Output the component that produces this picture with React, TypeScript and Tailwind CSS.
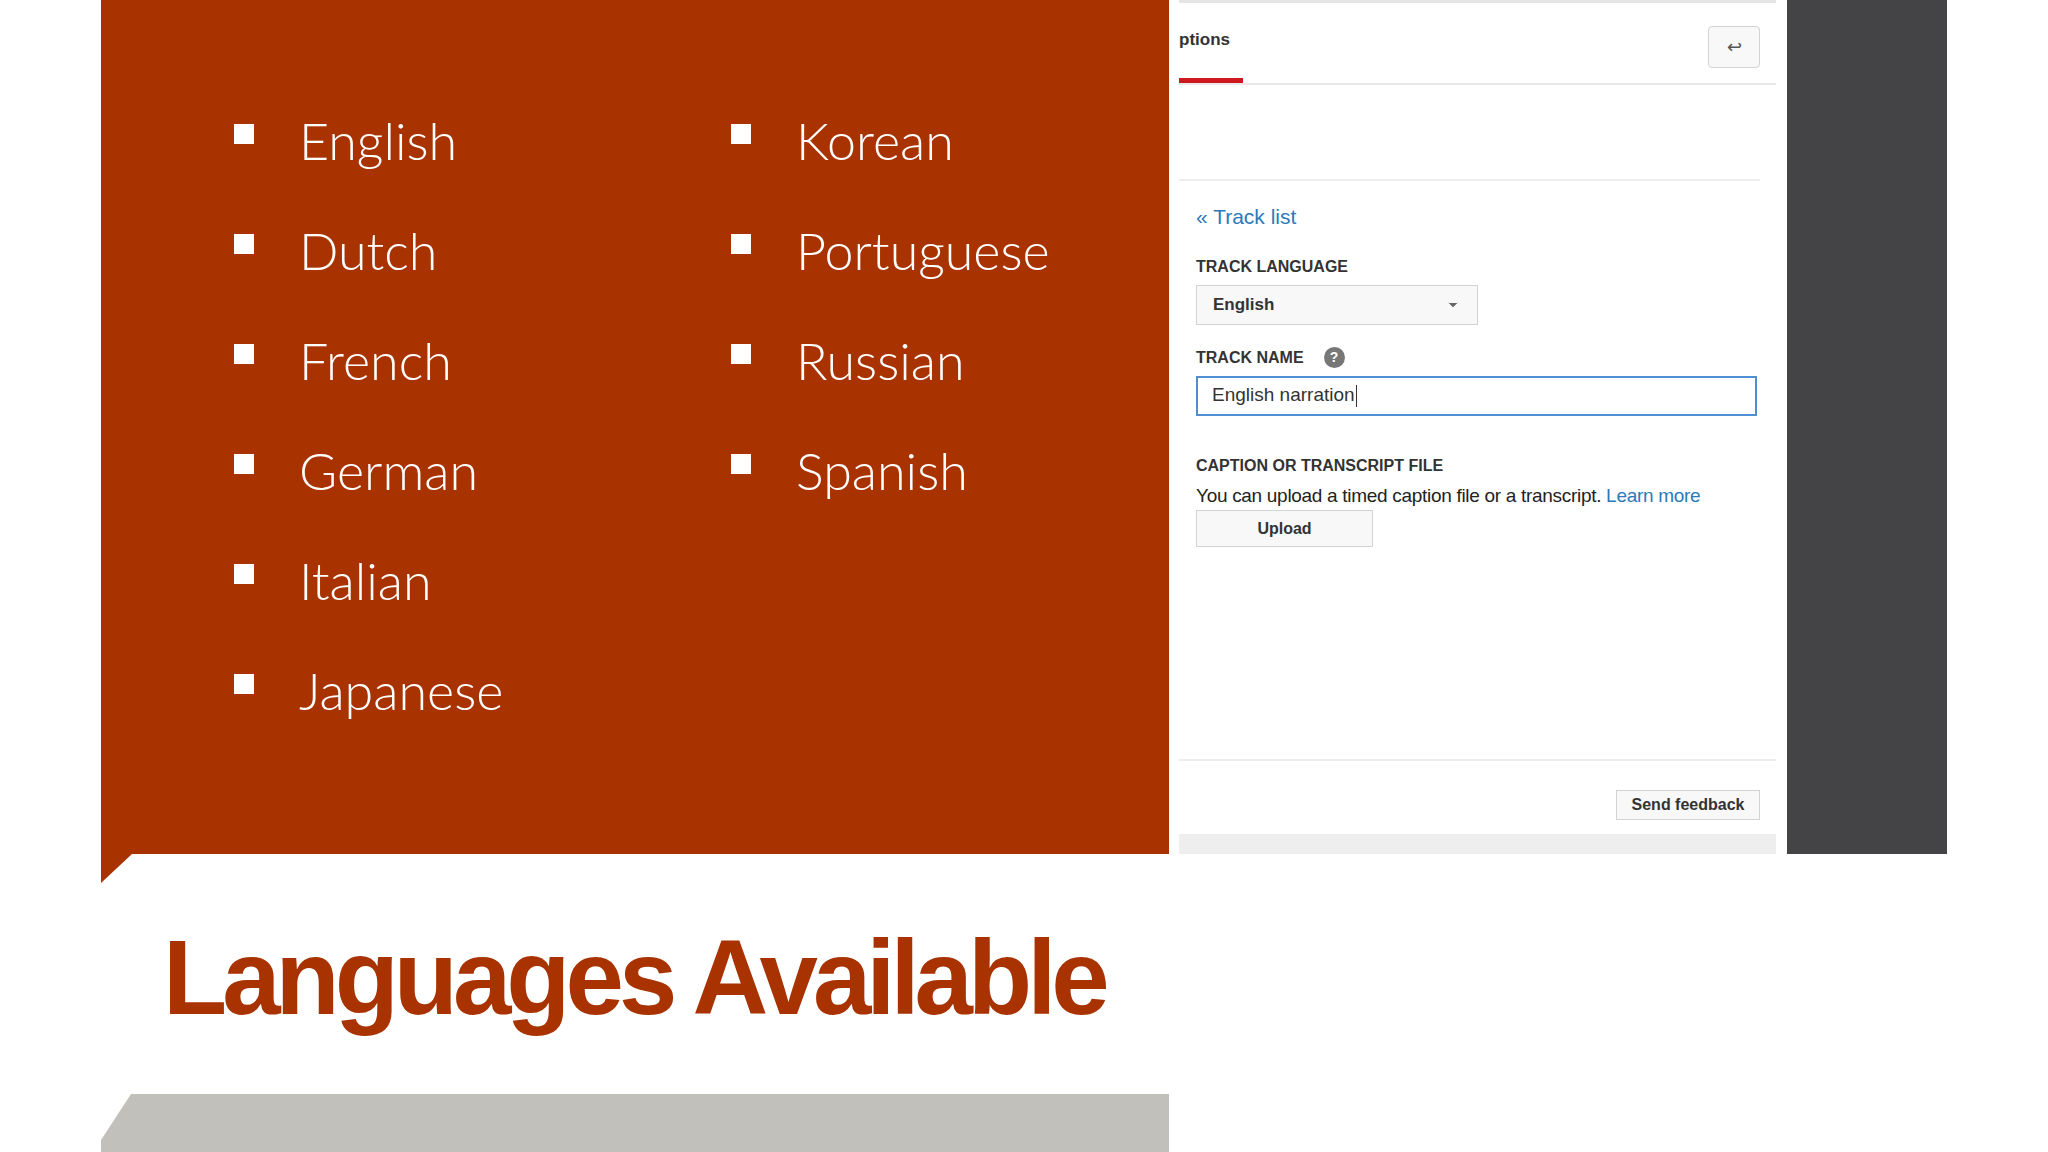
import React from 'react';
import { ChevronDown } from 'lucide-react';

const left = ['English', 'Dutch', 'French', 'German', 'Italian', 'Japanese'];
const right = ['Korean', 'Portuguese', 'Russian', 'Spanish'];

function Bullet({ label }: { label: string }) {
  return (
    <div className="flex h-[110px] items-center">
      <div className="mb-[12px] h-[20px] w-[20px] bg-white" />
      <span className="ml-[45px] text-[52px] font-light text-white" style={{ fontFamily: 'Lato, "Liberation Sans", sans-serif' }}>
        {label}
      </span>
    </div>
  );
}

function CaptionsPanel() {
  return (
    <div className="flex h-[854px] w-[597px] flex-col bg-white text-[#333]" style={{ fontFamily: '"Liberation Sans", Arial, sans-serif' }}>
      <div className="h-[3px] bg-[#e5e5e5]" />
      <div className="flex h-[82px] border-b-2 border-[#e8e8e8]">
        <div className="flex flex-col justify-end">
          <span className="mb-[26px] text-[17px] font-bold">ptions</span>
          <div className="h-[5px] w-[64px] bg-[#cc181e]" />
        </div>
        <div className="ml-auto mr-[16px] mt-[23px] flex h-[42px] w-[52px] items-center justify-center rounded-sm border border-[#d3d3d3] bg-[#f8f8f8] text-[18px] text-[#555]">
          ↩
        </div>
      </div>
      <div className="mr-[16px] mt-[94px] border-t-2 border-[#ececec]" />
      <div className="flex flex-col pl-[17px] pr-[19px]">
        <span className="mt-[20px] text-[21px] text-[#2a7ab9]">« Track list</span>
        <span className="mt-[22px] text-[16px] font-bold uppercase">Track language</span>
        <div className="mt-[6px] flex h-[40px] w-[282px] items-center justify-between border border-[#d3d3d3] bg-[#f8f8f8] px-[16px] text-[17px] font-bold">
          English
          <ChevronDown className="h-4 w-4 fill-[#666] text-[#666]" strokeWidth={1} />
        </div>
        <div className="mt-[21px] flex items-center gap-[20px]">
          <span className="text-[16px] font-bold uppercase">Track name</span>
          <span className="flex h-[21px] w-[21px] items-center justify-center rounded-full bg-[#777] text-[14px] font-bold text-white">?</span>
        </div>
        <div className="mt-[6px] flex h-[40px] items-center border-2 border-[#4d90d6] px-[14px] text-[19px]">
          English narration<span className="ml-[1px] h-[22px] w-[1px] bg-[#333]" />
        </div>
        <span className="mt-[38px] text-[16px] font-bold uppercase">Caption or transcript file</span>
        <span className="mt-[4px] text-[19px] tracking-[-0.3px] text-[#222]">
          You can upload a timed caption file or a transcript. <span className="text-[#2a7ab9]">Learn more</span>
        </span>
        <div className="flex h-[37px] w-[177px] items-center justify-center border border-[#d3d3d3] bg-[#f8f8f8] text-[16px] font-bold">
          Upload
        </div>
      </div>
      <div className="mt-[212px] border-t-2 border-[#ececec]" />
      <div className="flex justify-end pr-[16px] pt-[29px]">
        <div className="flex h-[30px] w-[144px] items-center justify-center border border-[#d3d3d3] bg-[#f8f8f8] text-[16px] font-bold">
          Send feedback
        </div>
      </div>
      <div className="mt-auto h-[20px] bg-[#eeeeee]" />
    </div>
  );
}

export default function App() {
  return (
    <div className="flex h-[1152px] w-[2048px] overflow-hidden bg-white">
      <div className="ml-[101px] flex w-[1068px] flex-col">
        <div className="flex h-[854px] bg-[#a83300] pl-[133px] pt-[85px]">
          <div className="w-[497px]">
            {left.map((l) => <Bullet key={l} label={l} />)}
          </div>
          <div>
            {right.map((l) => <Bullet key={l} label={l} />)}
          </div>
        </div>
        <div className="relative h-[240px]">
          <svg className="absolute left-0 top-0" width="31" height="30" viewBox="0 0 31 30">
            <polygon points="0,0 31,0 0,29" fill="#a83300" />
          </svg>
          <h1
            className="pl-[62px] pt-[71px] text-[105px] font-bold leading-[105px] tracking-[-5px] text-[#a83300]"
            style={{ fontFamily: '"Liberation Sans", Arial, sans-serif' }}
          >
            Languages Available
          </h1>
        </div>
        <div className="h-[58px] bg-[#c1c0bb] [clip-path:polygon(30px_0,100%_0,100%_100%,0_100%,0_46px)]" />
      </div>
      <div className="ml-[10px]">
        <CaptionsPanel />
      </div>
      <div className="ml-[11px] h-[854px] w-[160px] bg-[#444446]" />
    </div>
  );
}
